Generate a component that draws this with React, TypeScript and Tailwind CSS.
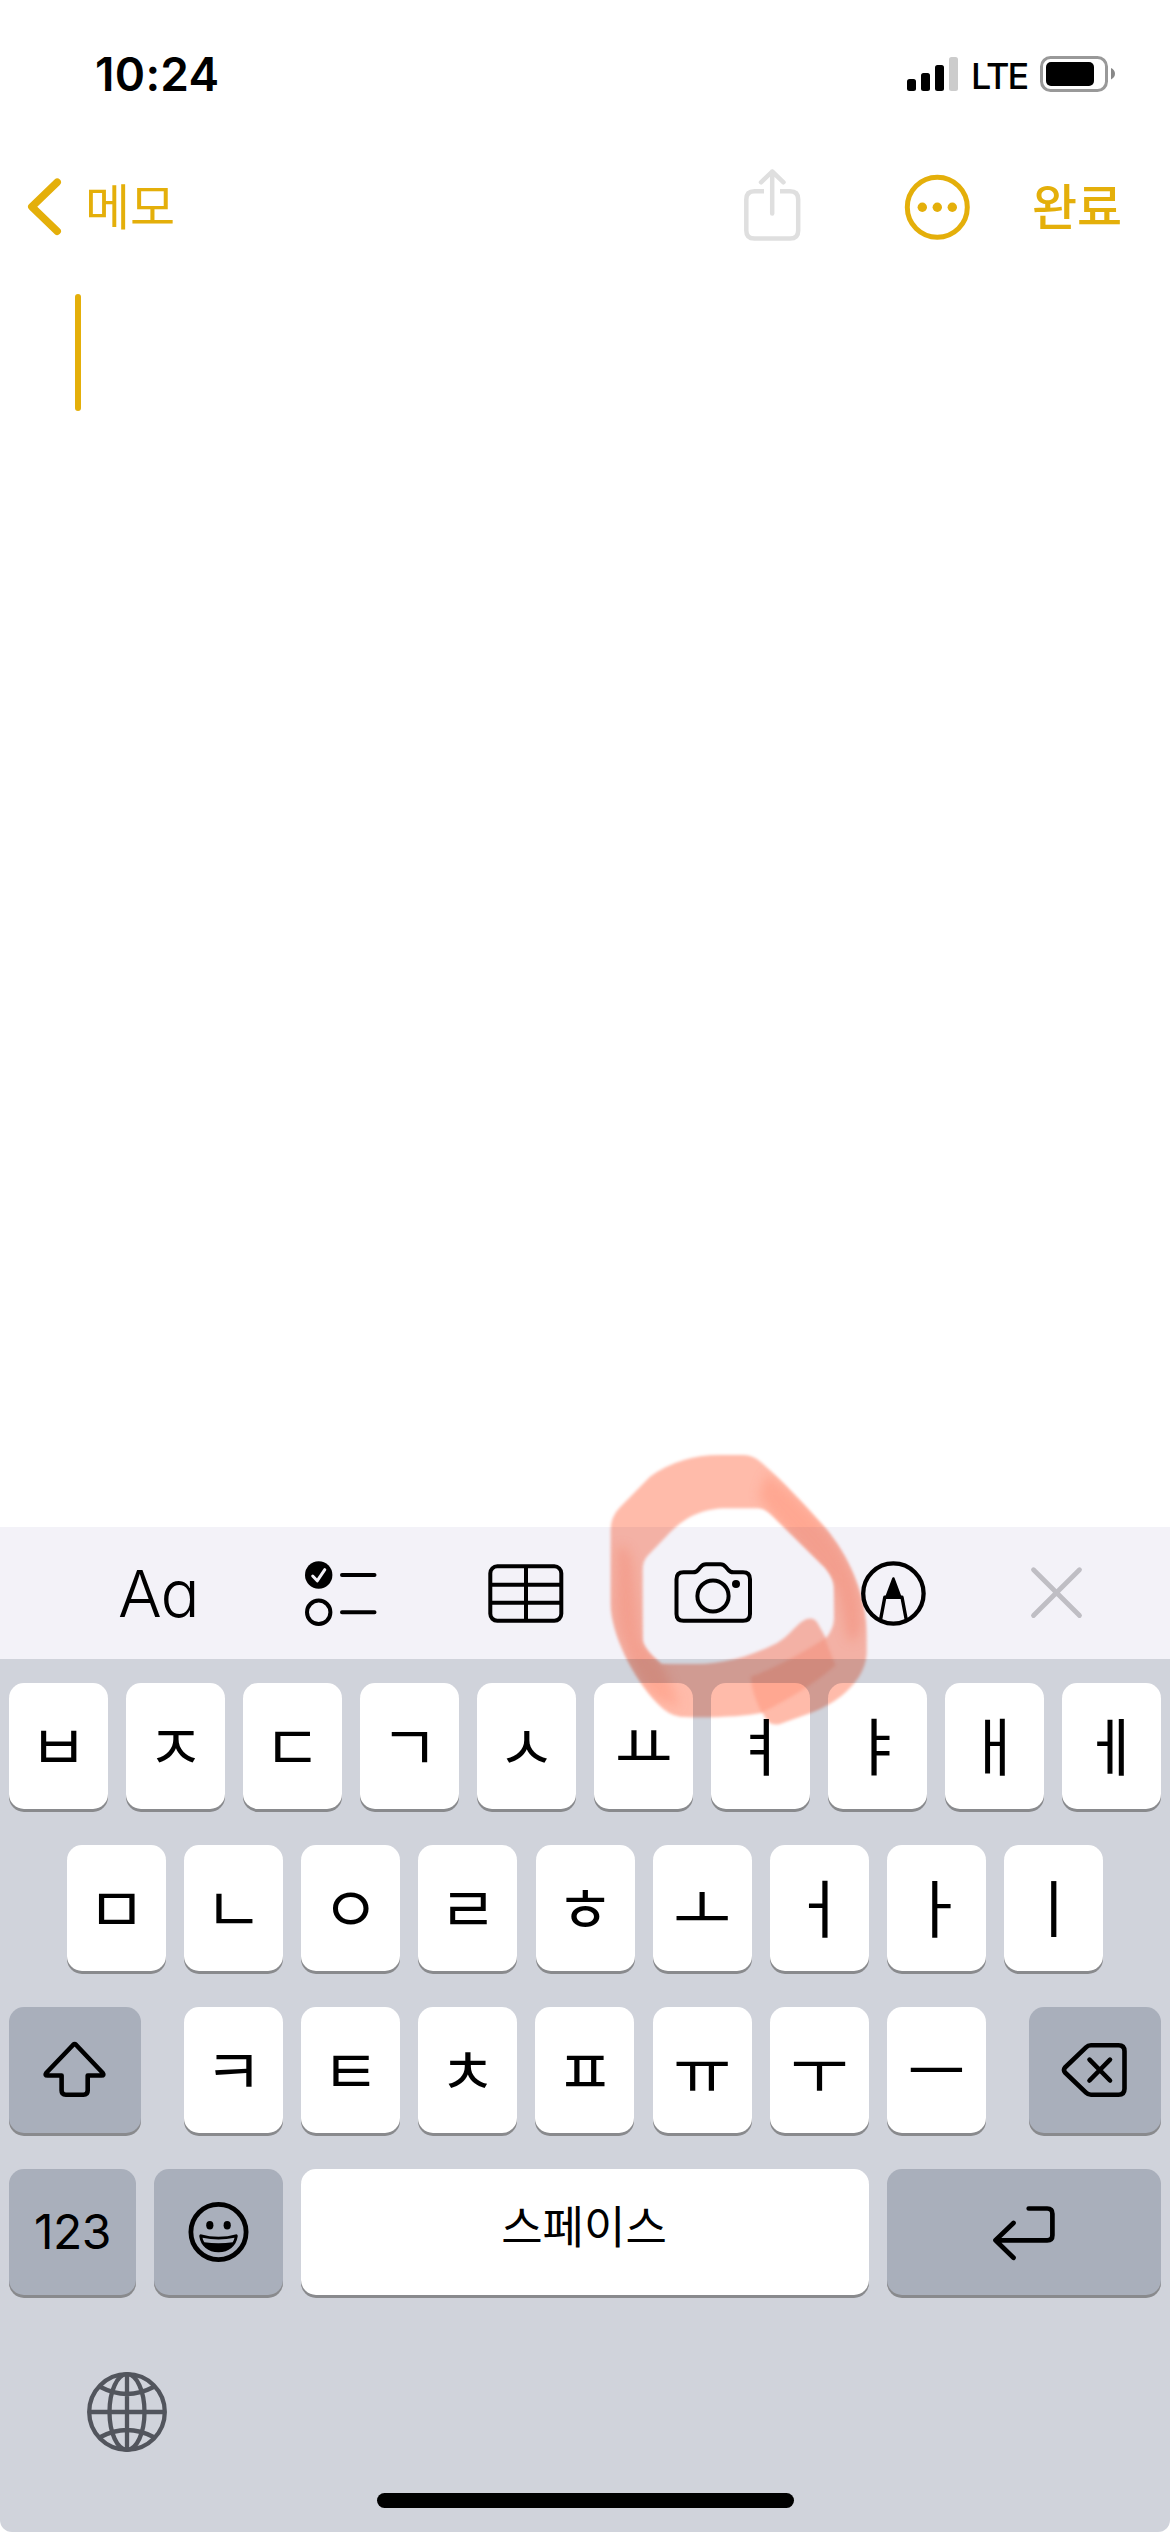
import type { ReactNode } from "react";

const ROW_1 = ["ㅂ", "ㅈ", "ㄷ", "ㄱ", "ㅅ", "ㅛ", "ㅕ", "ㅑ", "ㅐ", "ㅔ"];
const ROW_2 = ["ㅁ", "ㄴ", "ㅇ", "ㄹ", "ㅎ", "ㅗ", "ㅓ", "ㅏ", "ㅣ"];
const ROW_3 = ["ㅋ", "ㅌ", "ㅊ", "ㅍ", "ㅠ", "ㅜ", "ㅡ"];

function LetterKey({ label }: { label: string }) {
  return (
    <button className="flex h-[126px] w-[99px] shrink-0 items-center justify-center rounded-[15px] bg-white pt-[2px] text-[63px] leading-none font-normal text-black shadow-[0_3px_0_#898a8d]">
      {label}
    </button>
  );
}

function DarkKey({ className, label, children }: { className: string; label: string; children: ReactNode }) {
  return (
    <button
      aria-label={label}
      className={`flex h-[126px] shrink-0 items-center justify-center rounded-[15px] bg-[#a9afbb] text-black shadow-[0_3px_0_#898a8d] ${className}`}
    >
      {children}
    </button>
  );
}

function StatusBar() {
  return (
    <div className="flex h-[141px] justify-between pt-[46px] pr-[54px] pl-[95px]">
      <span className="h-[56px] text-[46px] leading-[56px] font-semibold tracking-[0.3px]">10:24</span>
      <div className="flex h-[56px] items-center">
        <svg width="52" height="56" viewBox="907 46 52 56">
          <rect x="907" y="79" width="9" height="12" rx="2.5" />
          <rect x="921" y="73" width="9" height="18" rx="2.5" />
          <rect x="935" y="65" width="9" height="26" rx="2.5" />
          <rect x="949" y="57" width="9" height="34" rx="2.5" fill="#ccc" />
        </svg>
        <span className="ml-3 w-[66px] pt-[3px] text-[36px] leading-none font-medium tracking-[-2px]">LTE</span>
        <svg width="79" height="56" viewBox="1037 46 79 56">
          <rect x="1041.5" y="57.5" width="65" height="33" rx="9" fill="none" stroke="#999" strokeWidth="3" />
          <rect x="1046" y="62" width="48" height="24" rx="5" />
          <path d="M1111 68q4 2 4 5.700t-4 5.700z" fill="#888" />
        </svg>
      </div>
    </div>
  );
}

function NavBar() {
  return (
    <div className="flex h-[132px] items-center text-[#e4af0a]">
      <svg className="ml-[26px]" width="36" height="60" viewBox="26 177 36 60" fill="none" stroke="currentColor" strokeWidth="7.500" strokeLinecap="round" strokeLinejoin="round">
        <path d="M57.200 182.200L31.800 206.700L57.200 231.200" />
      </svg>
      <span className="ml-[23px] text-[49px] leading-none">메모</span>
      <svg className="ml-auto" width="60" height="76" viewBox="742 169 60 76" fill="none" stroke="#dfdfdf" strokeWidth="4.500">
        <path d="M764 191.300H754.500Q746.300 191.300 746.300 199.500V230.500Q746.300 238.600 754.500 238.600H790Q798.200 238.600 798.200 230.500V199.500Q798.200 191.300 790 191.300H780" />
        <path d="M772.200 213.500V171.500M761 182.300L772.200 171.500L783.500 182.300" strokeLinecap="round" strokeLinejoin="round" />
      </svg>
      <svg className="ml-[102px]" width="66" height="76" viewBox="904 169 66 76">
        <circle cx="937.300" cy="207.300" r="30" fill="none" stroke="currentColor" strokeWidth="5" />
        <circle cx="922.300" cy="207.300" r="4.700" fill="currentColor" />
        <circle cx="937.300" cy="207.300" r="4.700" fill="currentColor" />
        <circle cx="952.300" cy="207.300" r="4.700" fill="currentColor" />
      </svg>
      <span className="mr-[48px] ml-[62px] w-[90px] text-[49px] leading-none font-medium whitespace-nowrap">완료</span>
    </div>
  );
}

function Toolbar() {
  return (
    <div className="flex h-[132px] items-center bg-[#f3f2f8]">
      <span className="ml-[118px] w-[80px] text-[65px] leading-none font-light tracking-[-1px] [font-feature-settings:'cv11']">Aa</span>
      {/* checklist */}
      <svg className="ml-[102px]" width="80" height="80" viewBox="300 1553 80 80" fill="none" stroke="#000" strokeWidth="4" strokeLinecap="round" strokeLinejoin="round">
        <circle cx="318.700" cy="1575" r="13.700" fill="#000" stroke="none" />
        <path d="M312.700 1576L317.200 1580.800L324.800 1569.700" stroke="#f3f2f8" strokeWidth="3" />
        <circle cx="318.700" cy="1612.300" r="11.700" />
        <path d="M342 1575H374.500M342 1612.300H374.500" />
      </svg>
      {/* table */}
      <svg className="ml-[106px]" width="80" height="80" viewBox="486 1553 80 80" fill="none" stroke="#000" strokeWidth="4">
        <rect x="490.300" y="1566.300" width="71" height="54.500" rx="7" />
        <path d="M526 1566V1621M490 1584.700H561M490 1602.800H561" />
      </svg>
      {/* camera */}
      <svg className="ml-[106px]" width="84" height="80" viewBox="672 1553 84 80" fill="none" stroke="#000" strokeWidth="4" strokeLinejoin="round">
        <path d="M683.500 1572.300H693Q696.500 1572.300 698.500 1569.500L700.500 1567Q702.800 1564.300 706 1564.300H720.500Q723.500 1564.300 725.800 1567L728 1569.500Q730 1572.300 733.500 1572.300H743Q750 1572.300 750 1579.300V1614Q750 1620.800 743 1620.800H683.500Q676.500 1620.800 676.500 1614V1579.300Q676.500 1572.300 683.500 1572.300Z" />
        <circle cx="713" cy="1596" r="15.600" />
        <circle cx="736" cy="1584" r="4" fill="#000" stroke="none" />
      </svg>
      {/* markup pen */}
      <svg className="ml-[102px]" width="72" height="80" viewBox="858 1553 72 80" fill="none" stroke="#000">
        <circle cx="893.400" cy="1593.500" r="30.200" strokeWidth="4.300" />
        <path d="M880.500 1620L884.800 1597.200H902L906.300 1620" strokeWidth="3.400" strokeLinejoin="round" />
        <path d="M893.400 1578.500L900.500 1597.500H886.300Z" fill="#000" strokeWidth="2.500" strokeLinejoin="round" />
      </svg>
      {/* close */}
      <svg className="ml-[98px]" width="56" height="80" viewBox="1028 1553 56 80" fill="none" stroke="#bfbec4" strokeWidth="4.800" strokeLinecap="round">
        <path d="M1033.500 1569.700L1079.500 1615.500M1079.500 1569.700L1033.500 1615.500" />
      </svg>
    </div>
  );
}

const RING =
  "M420 75H490Q520 75 545 98C610 155 665 215 735 293C805 375 862 500 860 620V670C858 720 825 765 785 797C725 845 660 858 600 882Q565 892 548 848C485 860 390 864 300 860Q265 856 232 820C160 745 92 610 92 520V300Q92 260 120 232L210 140Q300 75 420 75ZM430 235C350 238 300 275 260 318L205 375Q188 392 188 420V630Q192 660 245 702H350C420 702 500 685 590 640C625 618 645 590 665 575Q695 555 712 578L738 625Q762 595 762 565V470Q762 445 735 412L580 260Q555 235 535 235Z";

// Highlighter ring, drawn at a third of its unit size
function MarkerRing() {
  return (
    <svg className="pointer-events-none absolute top-[1430px] left-[580px] mix-blend-multiply" width="320" height="310" viewBox="0 0 960 930">
      <defs>
        <filter id="soft" x="-10%" y="-10%" width="120%" height="120%">
          <feGaussianBlur stdDeviation="4" />
        </filter>
        <filter id="softer" x="-30%" y="-30%" width="160%" height="160%">
          <feGaussianBlur stdDeviation="16" />
        </filter>
        <mask id="ring">
          <path d={RING} fill="#fff" fillRule="evenodd" filter="url(#soft)" />
        </mask>
      </defs>
      <path fill="#ffbbaa" fillRule="evenodd" filter="url(#soft)" d={RING} />
      <g mask="url(#ring)" fill="#ffa48e">
        <path filter="url(#softer)" d="M560 130C610 165 665 215 735 293C805 375 850 480 845 590Q825 660 800 620L770 480L590 270L535 200Z" opacity=".85" />
        <path filter="url(#softer)" d="M110 360Q135 320 160 400L185 630L250 710L300 830L232 810C160 745 105 610 105 520Z" opacity=".8" />
        <path filter="url(#soft)" d="M512 740Q600 710 735 625L766 706Q690 775 545 848Q515 790 512 740Z" opacity=".85" />
      </g>
    </svg>
  );
}

function Keyboard() {
  return (
    <div className="flex h-[873px] flex-col rounded-b-[12px] bg-[#d0d3db] px-[9px] pt-6">
      <div className="flex flex-col gap-9">
        <div className="flex justify-between">
          {ROW_1.map((k) => <LetterKey key={k} label={k} />)}
        </div>
        <div className="flex justify-between px-[58px]">
          {ROW_2.map((k) => <LetterKey key={k} label={k} />)}
        </div>
        <div className="flex justify-between">
          <DarkKey className="w-[132px]" label="Shift">
            <svg width="70" height="62" viewBox="40 2039 70 62" fill="none" stroke="#000" strokeWidth="4.600" strokeLinejoin="round">
              <path d="M73 2045Q74.600 2043.500 76.200 2045L102.800 2073Q104.500 2075.500 101.500 2075.500H87.700V2090.500Q87.700 2094.700 83.500 2094.700H65.800Q61.600 2094.700 61.600 2090.500V2075.500H47.500Q44.500 2075.500 46.200 2073Z" />
            </svg>
          </DarkKey>
          <div className="flex w-[802px] justify-between">
            {ROW_3.map((k) => <LetterKey key={k} label={k} />)}
          </div>
          <DarkKey className="w-[132px]" label="Delete">
            <svg width="70" height="62" viewBox="1060 2039 70 62" fill="none" stroke="#000" strokeWidth="4.600" strokeLinecap="round" strokeLinejoin="round">
              <path d="M1091 2045.300H1118.500Q1124.500 2045.300 1124.500 2051.300V2088.700Q1124.500 2094.700 1118.500 2094.700H1091Q1088 2094.700 1086 2092.700L1065 2072.500Q1063 2070 1065 2067.500L1086 2047.300Q1088 2045.300 1091 2045.300Z" />
              <path d="M1089.500 2059.700L1110 2080.500M1110 2059.700L1089.500 2080.500" />
            </svg>
          </DarkKey>
        </div>
        <div className="flex justify-between">
          <DarkKey className="w-[127px] text-[48px] tracking-[-0.5px]" label="123">123</DarkKey>
          <DarkKey className="w-[129px]" label="Emoji">
            <svg width="64" height="64" viewBox="186.500 2200 64 64">
              <circle cx="218" cy="2232" r="27.600" fill="none" stroke="#000" strokeWidth="4.800" />
              <ellipse cx="209.300" cy="2225.300" rx="3.600" ry="4.200" />
              <ellipse cx="226.700" cy="2225.300" rx="3.600" ry="4.200" />
              <path d="M200 2234.200Q218 2239.500 236 2234.200Q237.500 2234.500 237.200 2236.500C235.500 2246.500 228.500 2252.200 218 2252.200S200.500 2246.500 198.800 2236.500Q198.500 2234.500 200 2234.200Z" />
              <path d="M202 2237.800Q218 2241.300 234 2237.800Q233.500 2240.500 232.200 2242.200Q218 2244.500 203.800 2242.200Q202.500 2240.500 202 2237.800Z" fill="#a9afbb" />
            </svg>
          </DarkKey>
          <button className="flex h-[126px] w-[568px] items-center justify-center rounded-[15px] bg-white pr-[2px] pb-[10px] text-[45px] leading-none font-normal shadow-[0_3px_0_#898a8d]">
            스페이스
          </button>
          <DarkKey className="w-[274px]" label="Return">
            <svg width="72" height="62" viewBox="988 2201 72 62" fill="none" stroke="#000" strokeWidth="4.700" strokeLinecap="round" strokeLinejoin="round">
              <path d="M1028.700 2208.500H1047.200Q1052.400 2208.500 1052.400 2213.700V2235.200Q1052.400 2240.300 1047.200 2240.300H995.500M1013.500 2223L995.500 2240.300L1013.500 2257.800" />
            </svg>
          </DarkKey>
        </div>
      </div>
      <div className="mt-[75px] ml-[76px]">
        <svg width="84" height="84" viewBox="85 2370 84 84" fill="none" stroke="#52555d" strokeWidth="4.300">
          <circle cx="127" cy="2412" r="37.800" />
          <ellipse cx="127" cy="2412" rx="17.500" ry="37.800" />
          <path d="M127 2374V2450M89 2412H165M100.500 2387Q127 2401 153.500 2387M100.500 2437Q127 2423 153.500 2437" />
        </svg>
      </div>
      <div className="mt-[39px] h-[15px] w-[417px] self-center rounded-full bg-black" />
    </div>
  );
}

export default function App() {
  return (
    <div className="relative flex h-[2532px] w-[1170px] flex-col overflow-hidden bg-white font-[Inter,'Noto_Sans_CJK_KR',sans-serif] text-black">
      <StatusBar />
      <NavBar />
      <div className="flex-1 pt-[21px] pl-[75px]">
        <div className="h-[117px] w-[6px] rounded-full bg-[#e4af0a]" />
      </div>
      <Toolbar />
      <Keyboard />
      <MarkerRing />
    </div>
  );
}
